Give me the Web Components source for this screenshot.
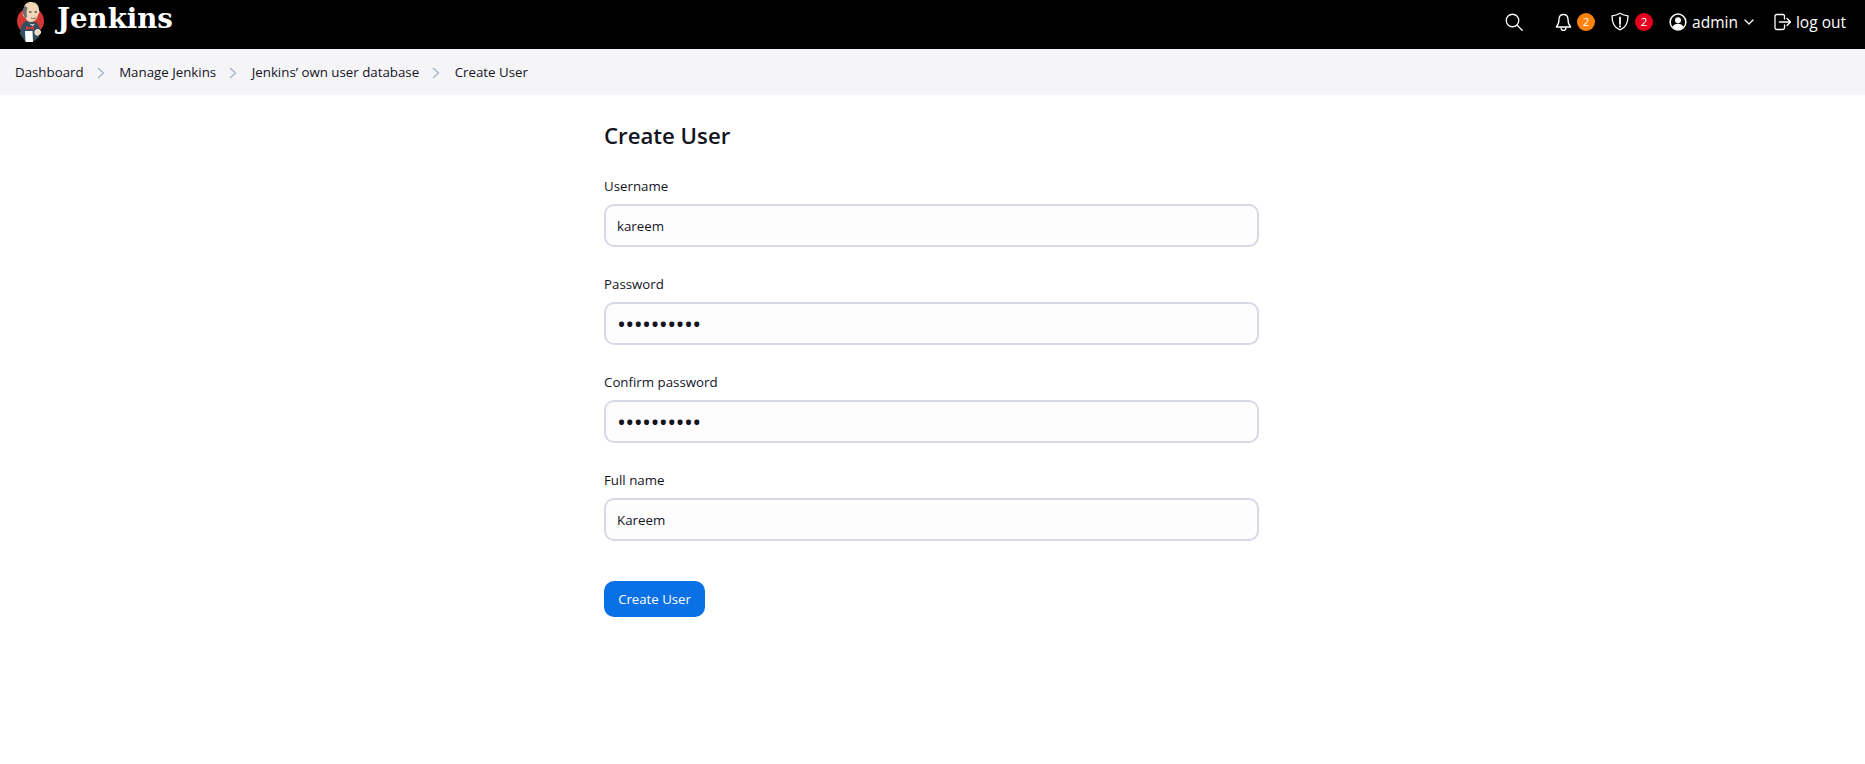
<!DOCTYPE html>
<html lang="en">
<head>
<meta charset="utf-8">
<title>Create User</title>
<style>
    html, body { margin: 0; height: 100%; background: #fff; }
    body { font-family: "Open Sans", "Noto Sans", sans-serif; color: #14141f; }
</style>
</head>
<body>
<jk-header></jk-header>
<jk-breadcrumbs>
    <jk-crumb>Dashboard</jk-crumb>
    <jk-crumb>Manage Jenkins</jk-crumb>
    <jk-crumb>Jenkins’ own user database</jk-crumb>
    <jk-crumb last>Create User</jk-crumb>
</jk-breadcrumbs>
<jk-form heading="Create User">
    <jk-field label="Username">kareem</jk-field>
    <jk-field label="Password" secret>••••••••••</jk-field>
    <jk-field label="Confirm password" secret>••••••••••</jk-field>
    <jk-field label="Full name">Kareem</jk-field>
    <jk-button slot="actions">Create User</jk-button>
</jk-form>

<script>
class JkHeader extends HTMLElement{
    constructor(){
        super();
        this.attachShadow({mode: 'open'});
        this.shadowRoot.innerHTML = `
            <style>
                :host {
                    display: flex;
                    align-items: center;
                    box-sizing: border-box;
                    height: 49px;
                    padding-bottom: 6px;
                    background: #000;
                    color: #fff;
                    font-size: 15.5px;
                }
                svg { display: block; flex: none; }
                .icon { fill: none; stroke: #fff; stroke-width: 1.3; stroke-linecap: round; stroke-linejoin: round; }
                #brand { display: flex; align-items: center; margin-left: 16px; }
                #name {
                    font: bold 27.6px "DejaVu Serif", serif;
                    margin-left: 12px;
                    margin-top: -6px;
                }
                #actions { display: flex; align-items: center; margin-left: auto; margin-right: 19px; }
                .badge {
                    width: 18px;
                    height: 18px;
                    border-radius: 50%;
                    font-size: 11.5px;
                    line-height: 18px;
                    text-align: center;
                    margin-left: 6px;
                }
                #search { margin-right: 32px; }
                #notes { background: #fe820a; margin-left: 5px; margin-right: 16px; }
                #alerts { background: #e6001f; margin-right: 16px; }
                #user { margin-left: 5px; }
                #caret { margin: 0 20px 0 6px; }
                #out { margin-left: 5px; }
            </style>
            <div id="brand">
                <svg width="29" height="42" viewBox="0 0 29 42">
                    <circle cx="14.500" cy="20" r="13.500" fill="#d33833"/>
                    <path d="M4 33c0-6 2-11 6-13l9 1c3 1 5 5 5 9l-1 6-5 4H9z" fill="#335061"/>
                    <path d="M8 8c0-5 3-7 7-7 5 0 8 3 8 8 1 2 0 4-1 4 0 4-3 8-7 8-3 0-5-2-6-5-2 0-3-3-2-5z" fill="#f0d6b7"/>
                    <path d="M8 6c-1.500 2-1.500 6-.5 8l2 3 1.500-1-.5-5 1-4-2-2z" fill="#6d6b6d"/>
                    <path d="M13 11h2.500M18.500 11h2.500" stroke="#1a1a1a" stroke-width="1.200"/>
                    <path d="M15 17c2 1 4 1 5-.5" stroke="#8a5a44" stroke-width="1" fill="none"/>
                    <path d="M13 22.500l3 1 3-.5-2.500 2z" fill="#fff"/>
                    <path d="M10 25l4 1.500 4-1.500v4l-4-1.500-4 1.500z" fill="#d33833"/>
                    <path d="M9 30h7.500l.5 11H9.500z" fill="#fff"/>
                    <path d="M20 29c2-1 4.500 0 4.500 2s-2 3.500-4 3-2-4-.5-5z" fill="#f0d6b7" stroke="#fff"/>
                </svg>
                <div id="name">Jenkins</div>
            </div>
            <div id="actions">
                <svg id="search" class="icon" width="18" height="18" viewBox="0 0 18 18">
                    <circle cx="7.500" cy="7.500" r="6.250"/><path d="M12.200 12.200l5 5"/>
                </svg>
                <svg class="icon" width="17" height="18" viewBox="0 0 17 18">
                    <path d="M8.500 1.500c-3 0-4.500 2.300-4.500 5 0 4-.8 5.500-2.700 7.500h14.400c-1.900-2-2.700-3.500-2.700-7.500 0-2.700-1.500-5-4.500-5z"/>
                    <path d="M6 14.500c0 1.800 1 3 2.500 3s2.500-1.200 2.500-3"/>
                </svg>
                <div class="badge" id="notes">2</div>
                <svg class="icon" width="18" height="19" viewBox="0 0 18 19">
                    <path d="M9 1.200c2.500 1.600 5 2.400 8 2.700 0 6.500-2.500 11.800-8 14-5.500-2.200-8-7.500-8-14 3-.3 5.500-1.100 8-2.700z"/>
                    <path d="M9 5.500v6.500" stroke-width="1.800"/><path d="M9 14.300v.1" stroke-width="2"/>
                </svg>
                <div class="badge" id="alerts">2</div>
                <svg width="18" height="18" viewBox="0 0 18 18">
                    <circle cx="9" cy="9" r="7.900" fill="none" stroke="#fff" stroke-width="1.500"/>
                    <circle cx="9" cy="7.200" r="3" fill="#fff"/>
                    <path d="M3.500 14c1-2.300 3-3.300 5.500-3.300s4.500 1 5.500 3.300c-1.300 1.500-3.300 2.300-5.500 2.300s-4.200-.8-5.500-2.300z" fill="#fff"/>
                </svg>
                <span id="user">admin</span>
                <svg id="caret" class="icon" width="10" height="6" viewBox="0 0 10 6"><path d="M1 1l4 4 4-4"/></svg>
                <svg class="icon" width="17" height="18" viewBox="0 0 17 18">
                    <path d="M10.500 6V3.200c0-1-.7-1.700-1.700-1.700H2.700C1.700 1.500 1 2.200 1 3.200v11.600c0 1 .7 1.700 1.700 1.700h6.100c1 0 1.700-.7 1.700-1.700V12"/>
                    <path d="M13 5.500L16.500 9 13 12.500M5.500 9h11"/>
                </svg>
                <span id="out">log out</span>
            </div>
        `
    }
}

class JkBreadcrumbs extends HTMLElement{
    constructor(){
        super();
        this.attachShadow({mode: 'open'});
        this.shadowRoot.innerHTML = `
            <style>
                :host {
                    display: flex;
                    align-items: center;
                    height: 46px;
                    padding-left: 15px;
                    background: #f5f5f8;
                    font-size: 13.3px;
                }
            </style>
            <slot></slot>
        `
    }
}

class JkCrumb extends HTMLElement{
    constructor(){
        super();
        this.attachShadow({mode: 'open'});
        this.shadowRoot.innerHTML = `
            <style>
                :host { display: flex; align-items: center; color: #14141f; }
                svg { margin: 1px 14.5px 0 13px; fill: none; stroke: #a5b1cb; stroke-width: 1.3; }
                :host([last]) svg { display: none; }
            </style>
            <slot></slot>
            <svg width="8" height="12" viewBox="0 0 8 12"><path d="M1 1l5.500 5L1 11"/></svg>
        `
    }
}

class JkForm extends HTMLElement{
    constructor(){
        super();
        this.attachShadow({mode: 'open'});
        this.shadowRoot.innerHTML = `
            <style>
                :host { display: block; width: 655px; margin: 0 0 0 604px; padding-top: 25px; }
                h1 { margin: 0 0 24px; font-size: 22.2px; font-weight: 600; line-height: 32px; color: #14141f; }
                #actions { margin-top: 40px; }
            </style>
            <h1></h1>
            <slot></slot>
            <div id="actions"><slot name="actions"></slot></div>
        `
        this.shadowRoot.querySelector('h1').textContent = this.getAttribute('heading');
    }
}

class JkField extends HTMLElement{
    constructor(){
        super();
        this.attachShadow({mode: 'open'});
        this.shadowRoot.innerHTML = `
            <style>
                :host { display: block; margin-bottom: 27px; font-size: 13.3px; }
                label { display: block; line-height: 20px; margin-bottom: 8px; }
                #input {
                    box-sizing: border-box;
                    height: 43px;
                    padding: 0 11px;
                    display: flex;
                    align-items: center;
                    background: #fdfdfe;
                    border: 2px solid #d6dae7;
                    border-radius: 10px;
                }
                :host([secret]) #input { font-size: 24px; letter-spacing: -0.65px; }
            </style>
            <label></label>
            <div id="input" role="textbox"><slot></slot></div>
        `
        this.shadowRoot.querySelector('label').textContent = this.getAttribute('label');
    }
}

class JkButton extends HTMLElement{
    constructor(){
        super();
        this.attachShadow({mode: 'open'});
        this.shadowRoot.innerHTML = `
            <style>
                :host { display: inline-block; }
                button {
                    height: 36px;
                    width: 101px;
                    padding: 0;
                    border: none;
                    border-radius: 10px;
                    background: #0a70e6;
                    color: #fff;
                    font: inherit;
                    font-size: 13.2px;
                }
            </style>
            <button><slot></slot></button>
        `
    }
}

customElements.define("jk-header", JkHeader);
customElements.define("jk-breadcrumbs", JkBreadcrumbs);
customElements.define("jk-crumb", JkCrumb);
customElements.define("jk-form", JkForm);
customElements.define("jk-field", JkField);
customElements.define("jk-button", JkButton);
</script>
</body>
</html>
